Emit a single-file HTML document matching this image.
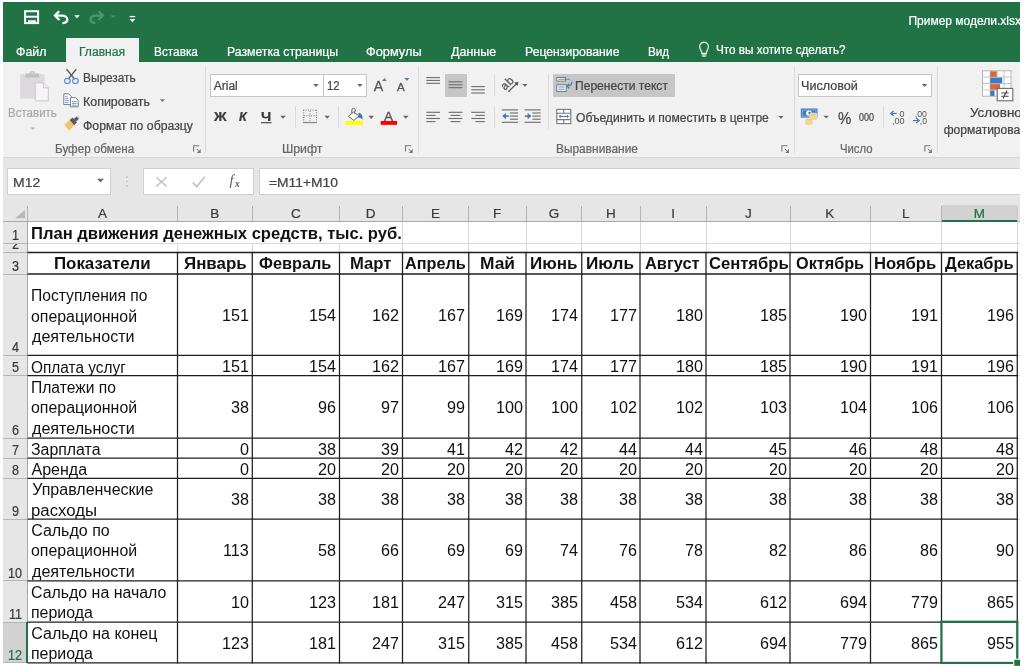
<!DOCTYPE html>
<html><head><meta charset="utf-8"><title>Excel</title>
<style>
html,body{margin:0;padding:0;background:#fff}
body{width:1024px;height:666px;overflow:hidden;position:relative;font-family:"Liberation Sans",sans-serif}
.t{position:absolute;white-space:nowrap;line-height:20px;transform-origin:0 0;font-family:"Liberation Sans",sans-serif}
.r{-webkit-text-stroke:0.22px currentColor}
svg{position:absolute;overflow:visible}
</style></head><body>
<div style="position:absolute;left:3px;top:2px;width:1017.4px;height:59.8px;background:#217346;"></div><div style="position:absolute;left:3px;top:61.7px;width:1017.4px;height:95.8px;background:#f1f1f1;"></div><div style="position:absolute;left:66px;top:38px;width:73px;height:26px;background:#f1f1f1;"></div><div style="position:absolute;left:3px;top:157px;width:1017.4px;height:1px;background:#d6d6d6;"></div><div style="position:absolute;left:3px;top:158px;width:1017.4px;height:63.5px;background:#e6e6e6;"></div><div style="position:absolute;left:205px;top:67px;width:1px;height:86px;background:#dadada;"></div><div style="position:absolute;left:417.5px;top:67px;width:1px;height:86px;background:#dadada;"></div><div style="position:absolute;left:793.5px;top:67px;width:1px;height:86px;background:#dadada;"></div><div style="position:absolute;left:936.5px;top:67px;width:1px;height:86px;background:#dadada;"></div><div style="position:absolute;left:294.5px;top:106px;width:1px;height:22px;background:#dadada;"></div><div style="position:absolute;left:338.3px;top:106px;width:1px;height:22px;background:#dadada;"></div><div style="position:absolute;left:493.7px;top:74.5px;width:1px;height:21.5px;background:#dadada;"></div><div style="position:absolute;left:493.7px;top:106px;width:1px;height:22px;background:#dadada;"></div><div style="position:absolute;left:548.2px;top:73.5px;width:1px;height:55px;background:#dadada;"></div><div style="position:absolute;left:883px;top:106px;width:1px;height:22px;background:#dadada;"></div><div style="position:absolute;left:210px;top:74px;width:112.00px;height:21.00px;background:#fff;border:1px solid #c6c6c6;box-sizing:content-box"></div><div style="position:absolute;left:323px;top:74px;width:42.00px;height:21.00px;background:#fff;border:1px solid #c6c6c6;box-sizing:content-box"></div><div style="position:absolute;left:798px;top:74px;width:132.00px;height:21.00px;background:#fff;border:1px solid #c6c6c6;box-sizing:content-box"></div><div style="position:absolute;left:7px;top:168px;width:101.75px;height:25.00px;background:#fff;border:1px solid #d0d0d0;box-sizing:content-box"></div><div style="position:absolute;left:142.5px;top:168px;width:109.25px;height:25.00px;background:#fff;border:1px solid #d0d0d0;box-sizing:content-box"></div><div style="position:absolute;left:258.75px;top:168px;width:760.75px;height:25.00px;background:#fff;border:1px solid #d0d0d0;box-sizing:content-box"></div><div style="position:absolute;left:444.5px;top:73.75px;width:22.2px;height:23.2px;background:#c6c6c6;"></div><div style="position:absolute;left:553px;top:73.75px;width:122px;height:23.2px;background:#c6c6c6;"></div>
<div style="position:absolute;left:3px;top:221.5px;width:1017.4px;height:444.5px;background:#fff;"></div><div style="position:absolute;left:3px;top:221.5px;width:24.5px;height:441.29999999999995px;background:#e6e6e6;"></div><div style="position:absolute;left:3px;top:622px;width:24.5px;height:40.799999999999955px;background:#d2d2d2;"></div><div style="position:absolute;left:941.5px;top:205px;width:75.75px;height:16.5px;background:#d2d2d2;"></div><div style="position:absolute;left:27.0px;top:206px;width:1px;height:15.5px;background:#b4b4b4;"></div><div style="position:absolute;left:177.0px;top:206px;width:1px;height:15.5px;background:#b4b4b4;"></div><div style="position:absolute;left:251.8px;top:206px;width:1px;height:15.5px;background:#b4b4b4;"></div><div style="position:absolute;left:339.0px;top:206px;width:1px;height:15.5px;background:#b4b4b4;"></div><div style="position:absolute;left:402.0px;top:206px;width:1px;height:15.5px;background:#b4b4b4;"></div><div style="position:absolute;left:468.25px;top:206px;width:1px;height:15.5px;background:#b4b4b4;"></div><div style="position:absolute;left:525.5px;top:206px;width:1px;height:15.5px;background:#b4b4b4;"></div><div style="position:absolute;left:581.25px;top:206px;width:1px;height:15.5px;background:#b4b4b4;"></div><div style="position:absolute;left:639.5px;top:206px;width:1px;height:15.5px;background:#b4b4b4;"></div><div style="position:absolute;left:705.5px;top:206px;width:1px;height:15.5px;background:#b4b4b4;"></div><div style="position:absolute;left:789.5px;top:206px;width:1px;height:15.5px;background:#b4b4b4;"></div><div style="position:absolute;left:870.0px;top:206px;width:1px;height:15.5px;background:#b4b4b4;"></div><div style="position:absolute;left:941.0px;top:206px;width:1px;height:15.5px;background:#b4b4b4;"></div><div style="position:absolute;left:1016.75px;top:206px;width:1px;height:15.5px;background:#c8c8c8;"></div><div style="position:absolute;left:3px;top:220.8px;width:1017.4px;height:1px;background:#a8a8a8;"></div><div style="position:absolute;left:941.5px;top:220.3px;width:75.75px;height:2px;background:#217346;"></div><div style="position:absolute;left:3px;top:242.7px;width:24.5px;height:1px;background:#b4b4b4;"></div><div style="position:absolute;left:3px;top:252.0px;width:24.5px;height:1px;background:#b4b4b4;"></div><div style="position:absolute;left:3px;top:273.5px;width:24.5px;height:1px;background:#b4b4b4;"></div><div style="position:absolute;left:3px;top:354.8px;width:24.5px;height:1px;background:#b4b4b4;"></div><div style="position:absolute;left:3px;top:375.0px;width:24.5px;height:1px;background:#b4b4b4;"></div><div style="position:absolute;left:3px;top:437.7px;width:24.5px;height:1px;background:#b4b4b4;"></div><div style="position:absolute;left:3px;top:457.5px;width:24.5px;height:1px;background:#b4b4b4;"></div><div style="position:absolute;left:3px;top:477.8px;width:24.5px;height:1px;background:#b4b4b4;"></div><div style="position:absolute;left:3px;top:518.7px;width:24.5px;height:1px;background:#b4b4b4;"></div><div style="position:absolute;left:3px;top:580.3px;width:24.5px;height:1px;background:#b4b4b4;"></div><div style="position:absolute;left:3px;top:621.5px;width:24.5px;height:1px;background:#b4b4b4;"></div><div style="position:absolute;left:3px;top:662.3px;width:24.5px;height:1px;background:#b4b4b4;"></div><div style="position:absolute;left:27px;top:221.5px;width:1px;height:441.29999999999995px;background:#a8a8a8;"></div><div style="position:absolute;left:26px;top:622px;width:2px;height:40.799999999999955px;background:#217346;"></div><div style="position:absolute;left:28px;top:242.7px;width:992.4px;height:1px;background:#d9d9d9;"></div><div style="position:absolute;left:177.0px;top:243.2px;width:1px;height:9.300000000000011px;background:#d9d9d9;"></div><div style="position:absolute;left:251.8px;top:243.2px;width:1px;height:9.300000000000011px;background:#d9d9d9;"></div><div style="position:absolute;left:339.0px;top:243.2px;width:1px;height:9.300000000000011px;background:#d9d9d9;"></div><div style="position:absolute;left:402.0px;top:222px;width:1px;height:30.5px;background:#d9d9d9;"></div><div style="position:absolute;left:468.25px;top:222px;width:1px;height:30.5px;background:#d9d9d9;"></div><div style="position:absolute;left:525.5px;top:222px;width:1px;height:30.5px;background:#d9d9d9;"></div><div style="position:absolute;left:581.25px;top:222px;width:1px;height:30.5px;background:#d9d9d9;"></div><div style="position:absolute;left:639.5px;top:222px;width:1px;height:30.5px;background:#d9d9d9;"></div><div style="position:absolute;left:705.5px;top:222px;width:1px;height:30.5px;background:#d9d9d9;"></div><div style="position:absolute;left:789.5px;top:222px;width:1px;height:30.5px;background:#d9d9d9;"></div><div style="position:absolute;left:870.0px;top:222px;width:1px;height:30.5px;background:#d9d9d9;"></div><div style="position:absolute;left:941.0px;top:222px;width:1px;height:30.5px;background:#d9d9d9;"></div><div style="position:absolute;left:1016.75px;top:222px;width:1px;height:30.5px;background:#d9d9d9;"></div><div style="position:absolute;left:1016.75px;top:222px;width:1px;height:440.79999999999995px;background:#d9d9d9;"></div><div style="position:absolute;left:1017.25px;top:252.0px;width:3.2px;height:1px;background:#d9d9d9;"></div><div style="position:absolute;left:1017.25px;top:273.5px;width:3.2px;height:1px;background:#d9d9d9;"></div><div style="position:absolute;left:1017.25px;top:354.8px;width:3.2px;height:1px;background:#d9d9d9;"></div><div style="position:absolute;left:1017.25px;top:375.0px;width:3.2px;height:1px;background:#d9d9d9;"></div><div style="position:absolute;left:1017.25px;top:437.7px;width:3.2px;height:1px;background:#d9d9d9;"></div><div style="position:absolute;left:1017.25px;top:457.5px;width:3.2px;height:1px;background:#d9d9d9;"></div><div style="position:absolute;left:1017.25px;top:477.8px;width:3.2px;height:1px;background:#d9d9d9;"></div><div style="position:absolute;left:1017.25px;top:518.7px;width:3.2px;height:1px;background:#d9d9d9;"></div><div style="position:absolute;left:1017.25px;top:580.3px;width:3.2px;height:1px;background:#d9d9d9;"></div><div style="position:absolute;left:1017.25px;top:621.5px;width:3.2px;height:1px;background:#d9d9d9;"></div><div style="position:absolute;left:1017.25px;top:662.3px;width:3.2px;height:1px;background:#d9d9d9;"></div><svg width="1024" height="666" viewBox="0 0 1024 666" style="left:0;top:0"><path d="M27.50 252.50L1017.88 252.50" stroke="#1e1e1e" stroke-width="1.7"/><path d="M27.50 274.00L1017.88 274.00" stroke="#1e1e1e" stroke-width="1.7"/><path d="M27.50 355.30L1017.88 355.30" stroke="#1e1e1e" stroke-width="1.25"/><path d="M27.50 375.50L1017.88 375.50" stroke="#1e1e1e" stroke-width="1.25"/><path d="M27.50 438.20L1017.88 438.20" stroke="#1e1e1e" stroke-width="1.25"/><path d="M27.50 458.00L1017.88 458.00" stroke="#1e1e1e" stroke-width="1.25"/><path d="M27.50 478.30L1017.88 478.30" stroke="#1e1e1e" stroke-width="1.25"/><path d="M27.50 519.20L1017.88 519.20" stroke="#1e1e1e" stroke-width="1.25"/><path d="M27.50 580.80L1017.88 580.80" stroke="#1e1e1e" stroke-width="1.25"/><path d="M27.50 622.00L1017.88 622.00" stroke="#1e1e1e" stroke-width="1.25"/><path d="M27.50 662.80L1017.88 662.80" stroke="#1e1e1e" stroke-width="1.25"/><path d="M177.50 251.90L177.50 663.40" stroke="#1e1e1e" stroke-width="1.25"/><path d="M252.30 251.90L252.30 663.40" stroke="#1e1e1e" stroke-width="1.25"/><path d="M339.50 251.90L339.50 663.40" stroke="#1e1e1e" stroke-width="1.25"/><path d="M402.50 251.90L402.50 663.40" stroke="#1e1e1e" stroke-width="1.25"/><path d="M468.75 251.90L468.75 663.40" stroke="#1e1e1e" stroke-width="1.25"/><path d="M526.00 251.90L526.00 663.40" stroke="#1e1e1e" stroke-width="1.25"/><path d="M581.75 251.90L581.75 663.40" stroke="#1e1e1e" stroke-width="1.25"/><path d="M640.00 251.90L640.00 663.40" stroke="#1e1e1e" stroke-width="1.25"/><path d="M706.00 251.90L706.00 663.40" stroke="#1e1e1e" stroke-width="1.25"/><path d="M790.00 251.90L790.00 663.40" stroke="#1e1e1e" stroke-width="1.25"/><path d="M870.50 251.90L870.50 663.40" stroke="#1e1e1e" stroke-width="1.25"/><path d="M941.50 251.90L941.50 663.40" stroke="#1e1e1e" stroke-width="1.25"/><path d="M1017.25 251.90L1017.25 663.40" stroke="#1e1e1e" stroke-width="1.25"/></svg><svg width="1024" height="666" viewBox="0 0 1024 666" style="left:0;top:0"><rect x="941.40" y="621.70" width="75.95" height="41.20" fill="none" stroke="#217346" stroke-width="2.1"/><rect x="1013.15" y="658.70" width="8" height="8" fill="#fff"/><rect x="1014.25" y="659.80" width="6" height="6" fill="#217346"/></svg>
<svg width="1024" height="666" viewBox="0 0 1024 666" style="left:0;top:0;will-change:transform"><g fill="none" stroke="#fff" stroke-width="2"><rect x="25.1" y="11.2" width="13" height="11.9"/><path d="M25 16.7H38.3"/></g><path d="M28 20.2H35.8V23.5H31.4V21.8H29.9V23.5H28z" fill="#fff"/><g fill="none" stroke="#fff" stroke-width="2.3" stroke-linejoin="miter"><path d="M59.2 11.2L54.9 15.6L59.4 20"/><path d="M55.4 15.6H62.2C65.4 15.6 67.3 17.4 67.3 19.6C67.3 21.7 65.6 23 62.4 23.1"/></g><path d="M74.20 15.25h5.6l-2.80 2.9z" fill="#fff"/><g fill="none" stroke="#4c9570" stroke-width="2.2"><path d="M98.6 11.2L102.9 15.6L98.4 20"/><path d="M102.4 15.6H95.6C92.4 15.6 90.5 17.4 90.5 19.6C90.5 21.7 92.2 23 95.4 23.1"/></g><path d="M110.50 15.40h5l-2.50 2.6z" fill="#4c9570"/><path d="M129.6 16.6H135.2" stroke="#fff" stroke-width="1.3"/><path d="M129.60 19.10h5.6l-2.80 3.2z" fill="#fff"/><path d="M701.9 53.4C701.9 51 699.7 49.6 699.7 46.6A4.35 4.35 0 0 1 708.4 46.6C708.4 49.6 706.2 51 706.2 53.4z" fill="none" stroke="#d4ebde" stroke-width="1.3"/><path d="M701.6 53.9H706.6M702 55.9H706.2" stroke="#d4ebde" stroke-width="1.5"/><rect x="20.1" y="74.3" width="24.3" height="24.3" rx="1" fill="#dcdadc"/><path d="M25.5 77.5V73.6H29.8V72.4A1.2 1.2 0 0 1 31 71.2H33.5A1.2 1.2 0 0 1 34.7 72.4V73.6H39V77.5z" fill="#c2c0c2"/><rect x="31.3" y="72.3" width="1.9" height="1.5" fill="#e8e6e8"/><path d="M35.2 82.9H43.4L48.3 87.8V100.9H35.2z" fill="#f6f4f6" stroke="#c9c7c9" stroke-width="1"/><path d="M43.4 82.9V87.8H48.3" fill="none" stroke="#c9c7c9" stroke-width="1"/><path d="M30.40 127.40h4.8l-2.40 2.4z" fill="#b4b4b4"/><g stroke="#5a5a5a" stroke-width="1.5" stroke-linecap="round"><path d="M66.9 69.6L74.2 78.6"/><path d="M75.9 69.6L68.6 78.6"/></g><g fill="none" stroke="#5b8ed6" stroke-width="1.15"><ellipse cx="67.4" cy="80.9" rx="2.8" ry="2.6"/><ellipse cx="75.4" cy="80.9" rx="2.8" ry="2.6"/></g><g fill="#fff" stroke="#7d7d7d" stroke-width="1"><path d="M63.8 93.8H68.6L71.2 96.4V104.6H63.8z"/><path d="M70.4 97.7H75.6L78.2 100.3V106.8H70.4z"/></g><path d="M65.2 96.6H67.4M65.2 98.6H68.6M65.2 100.6H68.6M65.2 102.6H68.6M72 101.6H76.6M72 103.4H76.6M72 105.2H76.6" stroke="#5b8fd0" stroke-width="0.9"/><path d="M64.2 124.8L69.6 119.9L74.2 125.2L69.2 130.8z" fill="#f2c46d"/><path d="M69.6 119.9L72.5 117.6L77 122.6L74.2 125.2z" fill="#5a5a5a"/><path d="M73.6 119L77 116.2L79.3 118.6L76.2 121.5z" fill="#5a5a5a"/><path d="M76.6 116.7L77.9 115.6L79.9 117.9L78.8 118.9z" fill="#d0d0d0"/><path d="M159.80 99.20h5.2l-2.60 2.8z" fill="#777"/><path d="M193.60 151.60V145.80H199.20" fill="none" stroke="#777" stroke-width="1.1"/><path d="M196.60 148.80L199.60 151.80" stroke="#777" stroke-width="1"/><path d="M200.70 149.00V152.90H196.80z" fill="#777"/><path d="M405.50 151.60V145.80H411.10" fill="none" stroke="#777" stroke-width="1.1"/><path d="M408.50 148.80L411.50 151.80" stroke="#777" stroke-width="1"/><path d="M412.60 149.00V152.90H408.70z" fill="#777"/><path d="M781.90 151.60V145.80H787.50" fill="none" stroke="#777" stroke-width="1.1"/><path d="M784.90 148.80L787.90 151.80" stroke="#777" stroke-width="1"/><path d="M789.00 149.00V152.90H785.10z" fill="#777"/><path d="M924.90 151.60V145.80H930.50" fill="none" stroke="#777" stroke-width="1.1"/><path d="M927.90 148.80L930.90 151.80" stroke="#777" stroke-width="1"/><path d="M932.00 149.00V152.90H928.10z" fill="#777"/><path d="M313.20 84.00h5.4l-2.70 3z" fill="#666"/><path d="M357.20 84.00h5.4l-2.70 3z" fill="#666"/><text x="373.7" y="91" font-family="Liberation Sans" font-size="14.2" fill="#555" stroke="#555" stroke-width="0.3">A</text><path d="M382.1 81.1L384.45 78L386.8 81.1z" fill="#4a7fc0"/><text x="396.9" y="91" font-family="Liberation Sans" font-size="11.6" fill="#555" stroke="#555" stroke-width="0.3">A</text><path d="M404.4 78H409.4L406.9 81.1z" fill="#4a7fc0"/><path d="M261 122.7H271.5" stroke="#3b3b3b" stroke-width="1.1"/><path d="M280.30 115.80h5.4l-2.70 3z" fill="#666"/><g stroke="#777" stroke-width="1" stroke-dasharray="1 1.35" fill="none"><path d="M303.2 110.1H317M303.7 110V121M316.5 110V121M310 111V121M304 115.8H317"/></g><path d="M303 122.5H317" stroke="#8a8a8a" stroke-width="1.3"/><path d="M324.40 115.80h5.4l-2.70 3z" fill="#666"/><path d="M358.6 112.8C361.6 113.4 363.2 116.2 362.3 119.7C361.2 118.2 360 117.6 358.2 117.9z" fill="#3a75b5"/><path d="M353.8 111.9L358.8 116.1L353.8 120.4L348.3 116.3z" fill="#fff" stroke="#666" stroke-width="1" stroke-linejoin="round"/><path d="M351.8 113.4V110.2A1.8 1.8 0 0 1 355.4 110.2V111.6" fill="none" stroke="#666" stroke-width="1"/><path d="M354.5 110.8V114.2" stroke="#888" stroke-width="0.9"/><rect x="345.3" y="121" width="17.8" height="3.85" fill="#ffff00"/><path d="M368.50 115.85h5.4l-2.70 3.1z" fill="#666"/><text x="384" y="120.6" font-family="Liberation Sans" font-size="13.6" fill="#555" stroke="#555" stroke-width="0.35">A</text><rect x="380.7" y="121" width="16.4" height="3.85" fill="#ff0000"/><path d="M403.10 115.80h5.4l-2.70 3z" fill="#666"/><path d="M426.3 77.6H440" stroke="#6a6a6a" stroke-width="1.1"/><path d="M426.3 80.4H440" stroke="#6a6a6a" stroke-width="1.1"/><path d="M426.3 83.3H440" stroke="#6a6a6a" stroke-width="1.1"/><path d="M448.6 81.8H462.4" stroke="#6a6a6a" stroke-width="1.1"/><path d="M448.6 84.8H462.4" stroke="#6a6a6a" stroke-width="1.1"/><path d="M448.6 87.7H462.4" stroke="#6a6a6a" stroke-width="1.1"/><path d="M471.3 86.6H484.8" stroke="#6a6a6a" stroke-width="1.1"/><path d="M471.3 89.8H484.8" stroke="#6a6a6a" stroke-width="1.1"/><path d="M471.3 93H484.8" stroke="#6a6a6a" stroke-width="1.1"/><text transform="translate(505.1,90.7) rotate(-45)" font-family="Liberation Sans" font-size="11.5" letter-spacing="0.5" fill="#555" stroke="#555" stroke-width="0.3">ab</text><path d="M508.4 91.8L516.6 83.6" stroke="#555" stroke-width="1.3"/><path d="M518.5 81.7L514.3 82.7L517.5 85.9z" fill="#555"/><path d="M522.30 84.00h5.2l-2.60 2.8z" fill="#666"/><path d="M426.3 112.3H440" stroke="#6a6a6a" stroke-width="1.1"/><path d="M426.3 115.4H435.6" stroke="#6a6a6a" stroke-width="1.1"/><path d="M426.3 118.5H440" stroke="#6a6a6a" stroke-width="1.1"/><path d="M426.3 121.6H435.6" stroke="#6a6a6a" stroke-width="1.1"/><path d="M448.6 112.3H462.4" stroke="#6a6a6a" stroke-width="1.1"/><path d="M450.6 115.4H460.3" stroke="#6a6a6a" stroke-width="1.1"/><path d="M448.6 118.5H462.4" stroke="#6a6a6a" stroke-width="1.1"/><path d="M450.6 121.6H460.3" stroke="#6a6a6a" stroke-width="1.1"/><path d="M471.3 112.3H484.8" stroke="#6a6a6a" stroke-width="1.1"/><path d="M475.5 115.4H484.8" stroke="#6a6a6a" stroke-width="1.1"/><path d="M471.3 118.5H484.8" stroke="#6a6a6a" stroke-width="1.1"/><path d="M475.5 121.6H484.8" stroke="#6a6a6a" stroke-width="1.1"/><path d="M501.8 109.9H518" stroke="#6a6a6a" stroke-width="1.1"/><path d="M501.8 122.3H518" stroke="#6a6a6a" stroke-width="1.1"/><path d="M509.9 113H518" stroke="#6a6a6a" stroke-width="1.1"/><path d="M509.9 116.1H518" stroke="#6a6a6a" stroke-width="1.1"/><path d="M509.9 119.2H518" stroke="#6a6a6a" stroke-width="1.1"/><path d="M508.8 116.1H503.4" stroke="#3d78c0" stroke-width="1.6"/><path d="M506 112.9L502.2 116.1L506 119.3z" fill="#3d78c0"/><path d="M524.5 109.9H540.6" stroke="#6a6a6a" stroke-width="1.1"/><path d="M524.5 122.3H540.6" stroke="#6a6a6a" stroke-width="1.1"/><path d="M532.4 113H540.6" stroke="#6a6a6a" stroke-width="1.1"/><path d="M532.4 116.1H540.6" stroke="#6a6a6a" stroke-width="1.1"/><path d="M532.4 119.2H540.6" stroke="#6a6a6a" stroke-width="1.1"/><path d="M524.8 116.1H529.8" stroke="#3d78c0" stroke-width="1.6"/><path d="M527.6 112.9L531.4 116.1L527.6 119.3z" fill="#3d78c0"/><rect x="556.8" y="77.5" width="8.6" height="3.6" fill="#fff" stroke="#777" stroke-width="1"/><path d="M558.4 79.3H570" stroke="#5b8fd0" stroke-width="1"/><rect x="556.8" y="84.8" width="9.4" height="6.6" fill="#fff" stroke="#777" stroke-width="1"/><path d="M558.4 87H564.6M558.4 89.2H564.6" stroke="#5b8fd0" stroke-width="1"/><path d="M571.8 81.6C572 84.6 570.4 86 567.6 86" fill="none" stroke="#3d78c0" stroke-width="1.2"/><path d="M569.2 83.8L566.8 86L569.2 88.2" fill="none" stroke="#3d78c0" stroke-width="1.2"/><rect x="556.8" y="109.4" width="14" height="14.2" fill="#fff" stroke="#777" stroke-width="1.1"/><path d="M556.8 113.2H570.8M556.8 119.6H570.8M563.8 109.4V113.2M563.8 119.6V123.6" stroke="#777" stroke-width="1.1"/><path d="M559.4 116.4H568.2" stroke="#3d78c0" stroke-width="1.1"/><path d="M560.6 114.6L558.6 116.4L560.6 118.2zM567 114.6L569 116.4L567 118.2z" fill="#3d78c0"/><path d="M778.30 115.90h5.2l-2.60 2.8z" fill="#666"/><path d="M921.80 84.00h5.4l-2.70 3z" fill="#666"/><rect x="800.8" y="108.5" width="16.7" height="9.1" fill="#3d78c0"/><rect x="802.3" y="110" width="13.7" height="6.1" fill="none" stroke="#9dbbe2" stroke-width="0.8"/><ellipse cx="808.9" cy="113" rx="2.9" ry="2.6" fill="#fff"/><path d="M808.3 113.6A1.4 1.4 0 1 1 810.2 114.4z" fill="#3d78c0"/><g fill="#f2c46d" stroke="#f1f1f1" stroke-width="0.7"><ellipse cx="813.4" cy="118.4" rx="3.9" ry="1.5"/><ellipse cx="813.4" cy="116.4" rx="3.9" ry="1.5"/><ellipse cx="813.4" cy="114.6" rx="3.9" ry="1.5"/><ellipse cx="809" cy="123.6" rx="3.9" ry="1.5"/><ellipse cx="809" cy="121.6" rx="3.9" ry="1.5"/><ellipse cx="809" cy="119.8" rx="3.9" ry="1.5"/></g><path d="M823.40 115.65h5.4l-2.70 2.9z" fill="#666"/><path d="M896.8 113.4H891.6" stroke="#3d78c0" stroke-width="1.2"/><path d="M893.6 111L890.6 113.4L893.6 115.8" fill="none" stroke="#3d78c0" stroke-width="1.2"/><text x="899.6" y="117" font-family="Liberation Sans" font-size="8.8" fill="#555" textLength="5" lengthAdjust="spacingAndGlyphs">0</text><text x="892" y="124.2" font-family="Liberation Sans" font-size="8.8" fill="#555" textLength="12.6" lengthAdjust="spacingAndGlyphs">,00</text><text x="914.8" y="117" font-family="Liberation Sans" font-size="8.8" fill="#555" textLength="12.2" lengthAdjust="spacingAndGlyphs">,00</text><path d="M913 120.6H918.4" stroke="#3d78c0" stroke-width="1.2"/><path d="M916.2 118.2L919.2 120.6L916.2 123" fill="none" stroke="#3d78c0" stroke-width="1.2"/><text x="919.8" y="124.2" font-family="Liberation Sans" font-size="8.8" fill="#555" textLength="7.2" lengthAdjust="spacingAndGlyphs">,0</text><rect x="982.5" y="70.8" width="28.5" height="25.4" fill="#fff" stroke="#b4b4b4" stroke-width="1"/><path d="M990.2 70.8V96.2M997 70.8V96.2M1004 70.8V96.2M982.5 77.1H1011M982.5 83.6H1011M982.5 90H1011" stroke="#c4c4c4" stroke-width="1"/><rect x="990.2" y="71.3" width="6.6" height="5.6" fill="#dc653a"/><rect x="990.2" y="77.6" width="12" height="5.7" fill="#3c79c6"/><rect x="990.2" y="84.1" width="9.8" height="5.6" fill="#dc653a"/><rect x="990.2" y="90.5" width="4.3" height="5.4" fill="#3c79c6"/><rect x="997.2" y="88.4" width="15.6" height="12.4" fill="#fff" stroke="#6a6a6a" stroke-width="1.1"/><path d="M1001.4 93H1008.6M1001.4 96.2H1008.6M1007 90.6L1003 98.6" stroke="#444" stroke-width="1.1"/><path d="M97.00 178.75h7l-3.50 3.7z" fill="#6a6a6a"/><rect x="126.2" y="176.3" width="1.4" height="1.4" fill="#b4b4b4"/><rect x="126.2" y="180.70000000000002" width="1.4" height="1.4" fill="#b4b4b4"/><rect x="126.2" y="185.20000000000002" width="1.4" height="1.4" fill="#b4b4b4"/><path d="M156.2 177.2L166.6 186.4M166.6 177.2L156.2 186.4" stroke="#c2c2c2" stroke-width="1.5"/><path d="M192.8 182.6L196.8 186.6L204.8 176.8" fill="none" stroke="#c2c2c2" stroke-width="1.7"/><text x="229.6" y="185.4" font-family="Liberation Serif" font-style="italic" font-size="14.5" fill="#606060">f</text><text x="234.9" y="186.6" font-family="Liberation Serif" font-style="italic" font-weight="700" font-size="9.6" fill="#555">x</text><path d="M25 210V218.2H15z" fill="#b8b8b8"/></svg>
<div id="txt" style="position:absolute;left:0;top:0;width:1024px;height:666px;will-change:transform"><span class="t r" style="left:16.33px;top:41.64px;font-size:12px;color:#fff;transform:scaleX(1.0339);">Файл</span><span class="t r" style="left:79.04px;top:41.64px;font-size:12px;color:#217346;transform:scaleX(1.0074);">Главная</span><span class="t r" style="left:153.56px;top:41.64px;font-size:12px;color:#fff;transform:scaleX(0.9845);">Вставка</span><span class="t r" style="left:226.53px;top:41.64px;font-size:12px;color:#fff;transform:scaleX(1.0202);">Разметка страницы</span><span class="t r" style="left:366.31px;top:41.64px;font-size:12px;color:#fff;transform:scaleX(1.0642);">Формулы</span><span class="t r" style="left:450.95px;top:41.64px;font-size:12px;color:#fff;transform:scaleX(1.0402);">Данные</span><span class="t r" style="left:524.78px;top:41.64px;font-size:12px;color:#fff;transform:scaleX(1.0199);">Рецензирование</span><span class="t r" style="left:647.83px;top:41.64px;font-size:12px;color:#fff;transform:scaleX(0.9729);">Вид</span><span class="t r" style="left:716.12px;top:40.44px;font-size:12px;color:#fff;transform:scaleX(0.9769);">Что вы хотите сделать?</span><span class="t r" style="left:908.45px;top:10.54px;font-size:12px;color:#fff;">Пример модели.xlsx</span><span class="t r" style="left:82.81px;top:68.34px;font-size:12px;color:#444;transform:scaleX(0.9861);">Вырезать</span><span class="t r" style="left:82.77px;top:91.59px;font-size:12px;color:#444;transform:scaleX(1.0362);">Копировать</span><span class="t r" style="left:83.09px;top:115.84px;font-size:12px;color:#444;transform:scaleX(1.0215);">Формат по образцу</span><span class="t r" style="left:7.84px;top:103.34px;font-size:12px;color:#a8a8a8;transform:scaleX(0.9603);">Вставить</span><span class="t r" style="left:54.58px;top:138.84px;font-size:12px;color:#666;transform:scaleX(0.9707);">Буфер обмена</span><span class="t r" style="left:213.75px;top:76.34px;font-size:12px;color:#444;">Arial</span><span class="t r" style="left:326.65px;top:76.34px;font-size:12px;color:#444;transform:scaleX(0.9475);">12</span><span class="t r" style="left:214.31px;top:106.92px;font-size:12.5px;color:#3b3b3b;font-weight:700;transform:scaleX(1.1135);">Ж</span><span class="t r" style="left:238.55px;top:106.92px;font-size:12.5px;color:#3b3b3b;font-weight:700;font-style:italic;transform:scaleX(1.0061);">К</span><span class="t r" style="left:261.24px;top:106.92px;font-size:12.5px;color:#3b3b3b;font-weight:700;transform:scaleX(1.1644);">Ч</span><span class="t r" style="left:282.28px;top:138.84px;font-size:12px;color:#666;transform:scaleX(1.0239);">Шрифт</span><span class="t r" style="left:575.29px;top:76.34px;font-size:12px;color:#444;transform:scaleX(1.0055);">Перенести текст</span><span class="t r" style="left:575.70px;top:108.34px;font-size:12px;color:#444;transform:scaleX(1.0051);">Объединить и поместить в центре</span><span class="t r" style="left:556.06px;top:138.84px;font-size:12px;color:#666;transform:scaleX(0.9923);">Выравнивание</span><span class="t r" style="left:800.81px;top:76.34px;font-size:12px;color:#444;transform:scaleX(1.0491);">Числовой</span><span class="t r" style="left:837.83px;top:107.68px;font-size:16.5px;color:#444;transform:scaleX(0.9075);">%</span><span class="t r" style="left:859.06px;top:107.16px;font-size:10.5px;color:#444;transform:scaleX(0.8548);">000</span><span class="t r" style="left:839.65px;top:138.84px;font-size:12px;color:#666;transform:scaleX(0.9430);">Число</span><span class="t r" style="left:969.86px;top:103.34px;font-size:12px;color:#444;transform:scaleX(1.1178);">Условное</span><span class="t r" style="left:943.75px;top:119.59px;font-size:12px;color:#444;">форматирование</span><span class="t r" style="left:13.41px;top:172.75px;font-size:13px;color:#444;transform:scaleX(1.0738);">M12</span><span class="t r" style="left:269.35px;top:172.75px;font-size:13px;color:#444;transform:scaleX(1.0648);">=M11+M10</span><span class="t r" style="left:97.96px;top:204.22px;font-size:13.5px;color:#3a3a3a;">A</span><span class="t r" style="left:210.15px;top:204.22px;font-size:13.5px;color:#3a3a3a;">B</span><span class="t r" style="left:290.94px;top:204.22px;font-size:13.5px;color:#3a3a3a;">C</span><span class="t r" style="left:365.83px;top:204.22px;font-size:13.5px;color:#3a3a3a;">D</span><span class="t r" style="left:430.88px;top:204.22px;font-size:13.5px;color:#3a3a3a;">E</span><span class="t r" style="left:492.95px;top:204.22px;font-size:13.5px;color:#3a3a3a;">F</span><span class="t r" style="left:548.81px;top:204.22px;font-size:13.5px;color:#3a3a3a;">G</span><span class="t r" style="left:606.02px;top:204.22px;font-size:13.5px;color:#3a3a3a;">H</span><span class="t r" style="left:671.21px;top:204.22px;font-size:13.5px;color:#3a3a3a;">I</span><span class="t r" style="left:744.94px;top:204.22px;font-size:13.5px;color:#3a3a3a;">J</span><span class="t r" style="left:825.29px;top:204.22px;font-size:13.5px;color:#3a3a3a;">K</span><span class="t r" style="left:901.89px;top:204.22px;font-size:13.5px;color:#3a3a3a;">L</span><span class="t r" style="left:973.68px;top:204.22px;font-size:13.5px;color:#217346;">M</span><span class="t r" style="left:11.96px;top:225.05px;font-size:14px;color:#3a3a3a;transform:scaleX(0.9000);">1</span><div style="position:absolute;left:3px;top:243.7px;width:24px;height:8.3px;overflow:hidden"><span class="t r" style="left:9.06px;top:-9.35px;font-size:14px;color:#3a3a3a;transform:scaleX(0.9)">2</span></div><span class="t r" style="left:12.15px;top:255.85px;font-size:14px;color:#3a3a3a;transform:scaleX(0.9000);">3</span><span class="t r" style="left:12.15px;top:337.15px;font-size:14px;color:#3a3a3a;transform:scaleX(0.9000);">4</span><span class="t r" style="left:12.15px;top:357.35px;font-size:14px;color:#3a3a3a;transform:scaleX(0.9000);">5</span><span class="t r" style="left:12.06px;top:420.05px;font-size:14px;color:#3a3a3a;transform:scaleX(0.9000);">6</span><span class="t r" style="left:12.06px;top:439.85px;font-size:14px;color:#3a3a3a;transform:scaleX(0.9000);">7</span><span class="t r" style="left:12.15px;top:460.15px;font-size:14px;color:#3a3a3a;transform:scaleX(0.9000);">8</span><span class="t r" style="left:12.06px;top:501.05px;font-size:14px;color:#3a3a3a;transform:scaleX(0.9000);">9</span><span class="t r" style="left:8.36px;top:562.65px;font-size:14px;color:#3a3a3a;transform:scaleX(0.9000);">10</span><span class="t r" style="left:8.92px;top:603.85px;font-size:14px;color:#3a3a3a;transform:scaleX(0.9000);">11</span><span class="t r" style="left:8.45px;top:644.65px;font-size:14px;color:#217346;transform:scaleX(0.9000);">12</span><span class="t" style="left:31.47px;top:223.71px;font-size:16px;color:#111;font-weight:700;transform:scaleX(1.0348);">План движения денежных средств, тыс. руб.</span><span class="t" style="left:54.45px;top:254.46px;font-size:16px;color:#111;font-weight:700;transform:scaleX(1.0539);">Показатели</span><span class="t" style="left:184.24px;top:254.46px;font-size:16px;color:#111;font-weight:700;transform:scaleX(1.0563);">Январь</span><span class="t" style="left:259.49px;top:254.46px;font-size:16px;color:#111;font-weight:700;transform:scaleX(1.0182);">Февраль</span><span class="t" style="left:350.21px;top:254.46px;font-size:16px;color:#111;font-weight:700;transform:scaleX(1.0394);">Март</span><span class="t" style="left:404.75px;top:254.46px;font-size:16px;color:#111;font-weight:700;transform:scaleX(1.0160);">Апрель</span><span class="t" style="left:479.91px;top:254.46px;font-size:16px;color:#111;font-weight:700;transform:scaleX(1.0854);">Май</span><span class="t" style="left:530.19px;top:254.46px;font-size:16px;color:#111;font-weight:700;transform:scaleX(1.0620);">Июнь</span><span class="t" style="left:586.43px;top:254.46px;font-size:16px;color:#111;font-weight:700;transform:scaleX(1.0711);">Июль</span><span class="t" style="left:645.24px;top:254.46px;font-size:16px;color:#111;font-weight:700;transform:scaleX(1.0246);">Август</span><span class="t" style="left:708.98px;top:254.46px;font-size:16px;color:#111;font-weight:700;transform:scaleX(1.0371);">Сентябрь</span><span class="t" style="left:796.24px;top:254.46px;font-size:16px;color:#111;font-weight:700;transform:scaleX(1.0147);">Октябрь</span><span class="t" style="left:874.46px;top:254.46px;font-size:16px;color:#111;font-weight:700;transform:scaleX(1.0367);">Ноябрь</span><span class="t" style="left:945.00px;top:254.46px;font-size:16px;color:#111;font-weight:700;transform:scaleX(1.0256);">Декабрь</span><span class="t" style="left:30.78px;top:286.46px;font-size:16px;color:#111;transform:scaleX(0.9766);">Поступления по</span><span class="t" style="left:31.40px;top:306.86px;font-size:16px;color:#111;transform:scaleX(0.9931);">операционной</span><span class="t" style="left:31.50px;top:327.46px;font-size:16px;color:#111;transform:scaleX(1.0045);">деятельности</span><span class="t" style="left:31.18px;top:357.86px;font-size:16px;color:#111;transform:scaleX(0.9621);">Оплата услуг</span><span class="t" style="left:31.28px;top:378.06px;font-size:16px;color:#111;transform:scaleX(0.9765);">Платежи по</span><span class="t" style="left:31.40px;top:398.26px;font-size:16px;color:#111;transform:scaleX(0.9940);">операционной</span><span class="t" style="left:31.50px;top:418.76px;font-size:16px;color:#111;transform:scaleX(1.0064);">деятельности</span><span class="t" style="left:31.40px;top:439.96px;font-size:16px;color:#111;transform:scaleX(0.9920);">Зарплата</span><span class="t" style="left:31.50px;top:460.26px;font-size:16px;color:#111;">Аренда</span><span class="t" style="left:32.25px;top:480.46px;font-size:16px;color:#111;">Управленческие</span><span class="t" style="left:30.85px;top:501.06px;font-size:16px;color:#111;transform:scaleX(1.0492);">расходы</span><span class="t" style="left:31.15px;top:520.86px;font-size:16px;color:#111;">Сальдо по</span><span class="t" style="left:31.40px;top:541.36px;font-size:16px;color:#111;transform:scaleX(0.9940);">операционной</span><span class="t" style="left:31.50px;top:561.96px;font-size:16px;color:#111;transform:scaleX(1.0064);">деятельности</span><span class="t" style="left:31.25px;top:583.06px;font-size:16px;color:#111;transform:scaleX(0.9941);">Сальдо на начало</span><span class="t" style="left:31.00px;top:603.16px;font-size:16px;color:#111;transform:scaleX(0.9954);">периода</span><span class="t" style="left:31.25px;top:624.36px;font-size:16px;color:#111;">Сальдо на конец</span><span class="t" style="left:31.00px;top:644.16px;font-size:16px;color:#111;transform:scaleX(0.9954);">периода</span><span class="t" style="left:221.84px;top:306.01px;font-size:16px;color:#111;transform:scaleX(1.0100);">151</span><span class="t" style="left:309.04px;top:306.01px;font-size:16px;color:#111;transform:scaleX(1.0100);">154</span><span class="t" style="left:372.04px;top:306.01px;font-size:16px;color:#111;transform:scaleX(1.0100);">162</span><span class="t" style="left:438.29px;top:306.01px;font-size:16px;color:#111;transform:scaleX(1.0100);">167</span><span class="t" style="left:495.54px;top:306.01px;font-size:16px;color:#111;transform:scaleX(1.0100);">169</span><span class="t" style="left:551.29px;top:306.01px;font-size:16px;color:#111;transform:scaleX(1.0100);">174</span><span class="t" style="left:609.54px;top:306.01px;font-size:16px;color:#111;transform:scaleX(1.0100);">177</span><span class="t" style="left:675.54px;top:306.01px;font-size:16px;color:#111;transform:scaleX(1.0100);">180</span><span class="t" style="left:759.54px;top:306.01px;font-size:16px;color:#111;transform:scaleX(1.0100);">185</span><span class="t" style="left:840.04px;top:306.01px;font-size:16px;color:#111;transform:scaleX(1.0100);">190</span><span class="t" style="left:911.04px;top:306.01px;font-size:16px;color:#111;transform:scaleX(1.0100);">191</span><span class="t" style="left:986.79px;top:306.01px;font-size:16px;color:#111;transform:scaleX(1.0100);">196</span><span class="t" style="left:221.84px;top:357.16px;font-size:16px;color:#111;transform:scaleX(1.0100);">151</span><span class="t" style="left:309.04px;top:357.16px;font-size:16px;color:#111;transform:scaleX(1.0100);">154</span><span class="t" style="left:372.04px;top:357.16px;font-size:16px;color:#111;transform:scaleX(1.0100);">162</span><span class="t" style="left:438.29px;top:357.16px;font-size:16px;color:#111;transform:scaleX(1.0100);">167</span><span class="t" style="left:495.54px;top:357.16px;font-size:16px;color:#111;transform:scaleX(1.0100);">169</span><span class="t" style="left:551.29px;top:357.16px;font-size:16px;color:#111;transform:scaleX(1.0100);">174</span><span class="t" style="left:609.54px;top:357.16px;font-size:16px;color:#111;transform:scaleX(1.0100);">177</span><span class="t" style="left:675.54px;top:357.16px;font-size:16px;color:#111;transform:scaleX(1.0100);">180</span><span class="t" style="left:759.54px;top:357.16px;font-size:16px;color:#111;transform:scaleX(1.0100);">185</span><span class="t" style="left:840.04px;top:357.16px;font-size:16px;color:#111;transform:scaleX(1.0100);">190</span><span class="t" style="left:911.04px;top:357.16px;font-size:16px;color:#111;transform:scaleX(1.0100);">191</span><span class="t" style="left:986.79px;top:357.16px;font-size:16px;color:#111;transform:scaleX(1.0100);">196</span><span class="t" style="left:230.83px;top:398.21px;font-size:16px;color:#111;transform:scaleX(1.0100);">38</span><span class="t" style="left:318.03px;top:398.21px;font-size:16px;color:#111;transform:scaleX(1.0100);">96</span><span class="t" style="left:381.03px;top:398.21px;font-size:16px;color:#111;transform:scaleX(1.0100);">97</span><span class="t" style="left:447.28px;top:398.21px;font-size:16px;color:#111;transform:scaleX(1.0100);">99</span><span class="t" style="left:495.54px;top:398.21px;font-size:16px;color:#111;transform:scaleX(1.0100);">100</span><span class="t" style="left:551.29px;top:398.21px;font-size:16px;color:#111;transform:scaleX(1.0100);">100</span><span class="t" style="left:609.54px;top:398.21px;font-size:16px;color:#111;transform:scaleX(1.0100);">102</span><span class="t" style="left:675.54px;top:398.21px;font-size:16px;color:#111;transform:scaleX(1.0100);">102</span><span class="t" style="left:759.54px;top:398.21px;font-size:16px;color:#111;transform:scaleX(1.0100);">103</span><span class="t" style="left:840.04px;top:398.21px;font-size:16px;color:#111;transform:scaleX(1.0100);">104</span><span class="t" style="left:911.04px;top:398.21px;font-size:16px;color:#111;transform:scaleX(1.0100);">106</span><span class="t" style="left:986.79px;top:398.21px;font-size:16px;color:#111;transform:scaleX(1.0100);">106</span><span class="t" style="left:239.81px;top:439.66px;font-size:16px;color:#111;transform:scaleX(1.0100);">0</span><span class="t" style="left:318.03px;top:439.66px;font-size:16px;color:#111;transform:scaleX(1.0100);">38</span><span class="t" style="left:381.03px;top:439.66px;font-size:16px;color:#111;transform:scaleX(1.0100);">39</span><span class="t" style="left:447.28px;top:439.66px;font-size:16px;color:#111;transform:scaleX(1.0100);">41</span><span class="t" style="left:504.53px;top:439.66px;font-size:16px;color:#111;transform:scaleX(1.0100);">42</span><span class="t" style="left:560.28px;top:439.66px;font-size:16px;color:#111;transform:scaleX(1.0100);">42</span><span class="t" style="left:618.53px;top:439.66px;font-size:16px;color:#111;transform:scaleX(1.0100);">44</span><span class="t" style="left:684.53px;top:439.66px;font-size:16px;color:#111;transform:scaleX(1.0100);">44</span><span class="t" style="left:768.53px;top:439.66px;font-size:16px;color:#111;transform:scaleX(1.0100);">45</span><span class="t" style="left:849.03px;top:439.66px;font-size:16px;color:#111;transform:scaleX(1.0100);">46</span><span class="t" style="left:920.03px;top:439.66px;font-size:16px;color:#111;transform:scaleX(1.0100);">48</span><span class="t" style="left:995.78px;top:439.66px;font-size:16px;color:#111;transform:scaleX(1.0100);">48</span><span class="t" style="left:239.81px;top:459.96px;font-size:16px;color:#111;transform:scaleX(1.0100);">0</span><span class="t" style="left:318.03px;top:459.96px;font-size:16px;color:#111;transform:scaleX(1.0100);">20</span><span class="t" style="left:381.03px;top:459.96px;font-size:16px;color:#111;transform:scaleX(1.0100);">20</span><span class="t" style="left:447.28px;top:459.96px;font-size:16px;color:#111;transform:scaleX(1.0100);">20</span><span class="t" style="left:504.53px;top:459.96px;font-size:16px;color:#111;transform:scaleX(1.0100);">20</span><span class="t" style="left:560.28px;top:459.96px;font-size:16px;color:#111;transform:scaleX(1.0100);">20</span><span class="t" style="left:618.53px;top:459.96px;font-size:16px;color:#111;transform:scaleX(1.0100);">20</span><span class="t" style="left:684.53px;top:459.96px;font-size:16px;color:#111;transform:scaleX(1.0100);">20</span><span class="t" style="left:768.53px;top:459.96px;font-size:16px;color:#111;transform:scaleX(1.0100);">20</span><span class="t" style="left:849.03px;top:459.96px;font-size:16px;color:#111;transform:scaleX(1.0100);">20</span><span class="t" style="left:920.03px;top:459.96px;font-size:16px;color:#111;transform:scaleX(1.0100);">20</span><span class="t" style="left:995.78px;top:459.96px;font-size:16px;color:#111;transform:scaleX(1.0100);">20</span><span class="t" style="left:230.83px;top:490.11px;font-size:16px;color:#111;transform:scaleX(1.0100);">38</span><span class="t" style="left:318.03px;top:490.11px;font-size:16px;color:#111;transform:scaleX(1.0100);">38</span><span class="t" style="left:381.03px;top:490.11px;font-size:16px;color:#111;transform:scaleX(1.0100);">38</span><span class="t" style="left:447.28px;top:490.11px;font-size:16px;color:#111;transform:scaleX(1.0100);">38</span><span class="t" style="left:504.53px;top:490.11px;font-size:16px;color:#111;transform:scaleX(1.0100);">38</span><span class="t" style="left:560.28px;top:490.11px;font-size:16px;color:#111;transform:scaleX(1.0100);">38</span><span class="t" style="left:618.53px;top:490.11px;font-size:16px;color:#111;transform:scaleX(1.0100);">38</span><span class="t" style="left:684.53px;top:490.11px;font-size:16px;color:#111;transform:scaleX(1.0100);">38</span><span class="t" style="left:768.53px;top:490.11px;font-size:16px;color:#111;transform:scaleX(1.0100);">38</span><span class="t" style="left:849.03px;top:490.11px;font-size:16px;color:#111;transform:scaleX(1.0100);">38</span><span class="t" style="left:920.03px;top:490.11px;font-size:16px;color:#111;transform:scaleX(1.0100);">38</span><span class="t" style="left:995.78px;top:490.11px;font-size:16px;color:#111;transform:scaleX(1.0100);">38</span><span class="t" style="left:223.04px;top:541.36px;font-size:16px;color:#111;transform:scaleX(1.0100);">113</span><span class="t" style="left:318.03px;top:541.36px;font-size:16px;color:#111;transform:scaleX(1.0100);">58</span><span class="t" style="left:381.03px;top:541.36px;font-size:16px;color:#111;transform:scaleX(1.0100);">66</span><span class="t" style="left:447.28px;top:541.36px;font-size:16px;color:#111;transform:scaleX(1.0100);">69</span><span class="t" style="left:504.53px;top:541.36px;font-size:16px;color:#111;transform:scaleX(1.0100);">69</span><span class="t" style="left:560.28px;top:541.36px;font-size:16px;color:#111;transform:scaleX(1.0100);">74</span><span class="t" style="left:618.53px;top:541.36px;font-size:16px;color:#111;transform:scaleX(1.0100);">76</span><span class="t" style="left:684.53px;top:541.36px;font-size:16px;color:#111;transform:scaleX(1.0100);">78</span><span class="t" style="left:768.53px;top:541.36px;font-size:16px;color:#111;transform:scaleX(1.0100);">82</span><span class="t" style="left:849.03px;top:541.36px;font-size:16px;color:#111;transform:scaleX(1.0100);">86</span><span class="t" style="left:920.03px;top:541.36px;font-size:16px;color:#111;transform:scaleX(1.0100);">86</span><span class="t" style="left:995.78px;top:541.36px;font-size:16px;color:#111;transform:scaleX(1.0100);">90</span><span class="t" style="left:230.83px;top:592.76px;font-size:16px;color:#111;transform:scaleX(1.0100);">10</span><span class="t" style="left:309.04px;top:592.76px;font-size:16px;color:#111;transform:scaleX(1.0100);">123</span><span class="t" style="left:372.04px;top:592.76px;font-size:16px;color:#111;transform:scaleX(1.0100);">181</span><span class="t" style="left:438.29px;top:592.76px;font-size:16px;color:#111;transform:scaleX(1.0100);">247</span><span class="t" style="left:495.54px;top:592.76px;font-size:16px;color:#111;transform:scaleX(1.0100);">315</span><span class="t" style="left:551.29px;top:592.76px;font-size:16px;color:#111;transform:scaleX(1.0100);">385</span><span class="t" style="left:609.54px;top:592.76px;font-size:16px;color:#111;transform:scaleX(1.0100);">458</span><span class="t" style="left:675.54px;top:592.76px;font-size:16px;color:#111;transform:scaleX(1.0100);">534</span><span class="t" style="left:759.54px;top:592.76px;font-size:16px;color:#111;transform:scaleX(1.0100);">612</span><span class="t" style="left:840.04px;top:592.76px;font-size:16px;color:#111;transform:scaleX(1.0100);">694</span><span class="t" style="left:911.04px;top:592.76px;font-size:16px;color:#111;transform:scaleX(1.0100);">779</span><span class="t" style="left:986.79px;top:592.76px;font-size:16px;color:#111;transform:scaleX(1.0100);">865</span><span class="t" style="left:221.84px;top:633.76px;font-size:16px;color:#111;transform:scaleX(1.0100);">123</span><span class="t" style="left:309.04px;top:633.76px;font-size:16px;color:#111;transform:scaleX(1.0100);">181</span><span class="t" style="left:372.04px;top:633.76px;font-size:16px;color:#111;transform:scaleX(1.0100);">247</span><span class="t" style="left:438.29px;top:633.76px;font-size:16px;color:#111;transform:scaleX(1.0100);">315</span><span class="t" style="left:495.54px;top:633.76px;font-size:16px;color:#111;transform:scaleX(1.0100);">385</span><span class="t" style="left:551.29px;top:633.76px;font-size:16px;color:#111;transform:scaleX(1.0100);">458</span><span class="t" style="left:609.54px;top:633.76px;font-size:16px;color:#111;transform:scaleX(1.0100);">534</span><span class="t" style="left:675.54px;top:633.76px;font-size:16px;color:#111;transform:scaleX(1.0100);">612</span><span class="t" style="left:759.54px;top:633.76px;font-size:16px;color:#111;transform:scaleX(1.0100);">694</span><span class="t" style="left:840.04px;top:633.76px;font-size:16px;color:#111;transform:scaleX(1.0100);">779</span><span class="t" style="left:911.04px;top:633.76px;font-size:16px;color:#111;transform:scaleX(1.0100);">865</span><span class="t" style="left:986.79px;top:633.76px;font-size:16px;color:#111;transform:scaleX(1.0100);">955</span></div>
<div style="position:absolute;left:0;top:0;width:3px;height:666px;background:#fff"></div>
<div style="position:absolute;left:1020.4px;top:0;width:4px;height:666px;background:#fff"></div>
<div style="position:absolute;left:0;top:0;width:1024px;height:2px;background:#fff"></div>
</body></html>
